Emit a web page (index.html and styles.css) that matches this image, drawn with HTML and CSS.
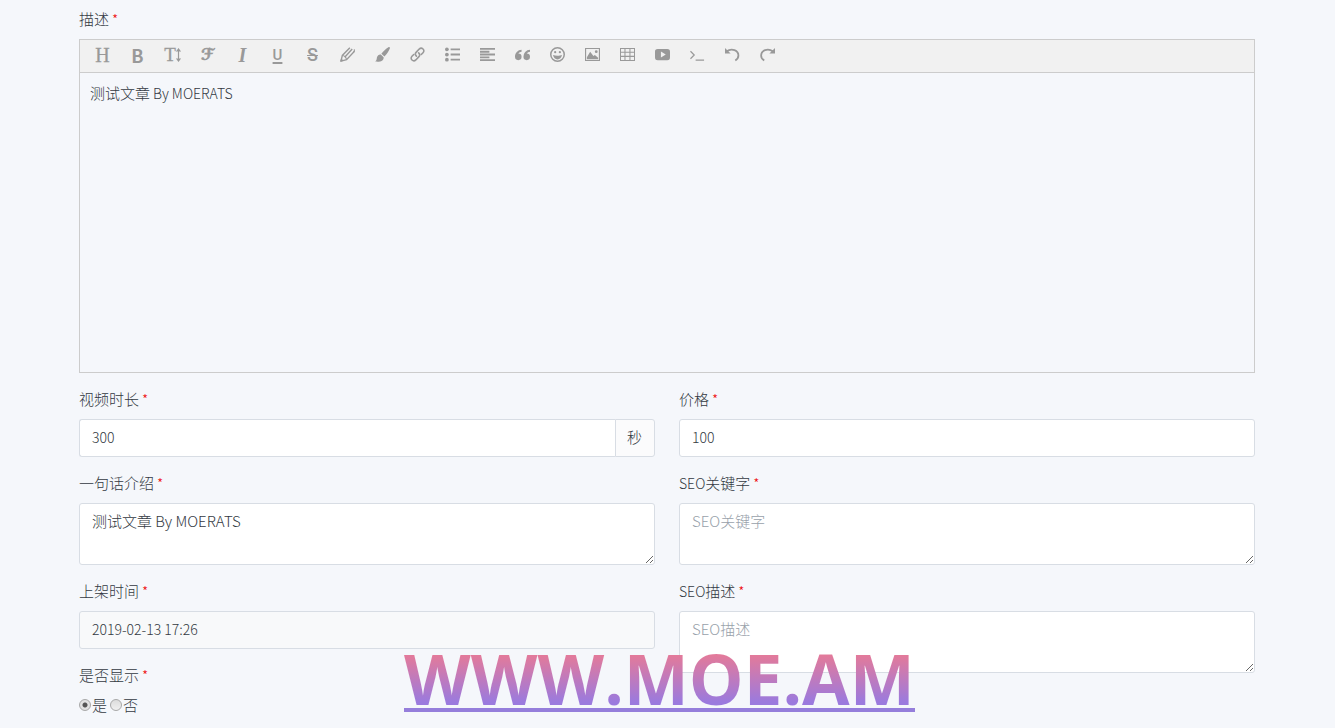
FILE: index.html
```html
<!DOCTYPE html>
<html lang="zh-CN">
<head>
<meta charset="utf-8">
<title>文章编辑</title>
<link rel="stylesheet" href="styles.css">
</head>
<body>
<form class="page">
  <section class="group">
    <span class="label" id="desc-label">描述<span class="req">*</span></span>
    <div class="editor">
      <div class="toolbar" role="toolbar" aria-label="编辑器">
        <button type="button" class="tool tool-h">H</button>
        <button type="button" class="tool tool-b">B</button>
        <button type="button" class="tool tool-t" aria-label="字号">T<svg class="updown" viewBox="0 0 5 14"><path d="M2.5 2v10M0.6 3.6L2.5 1l1.9 2.6M0.6 10.4L2.5 13l1.9-2.6" fill="none" stroke="currentColor" stroke-width="1.2"/></svg></button>
        <button type="button" class="tool tool-f">ℱ</button>
        <button type="button" class="tool tool-i">I</button>
        <button type="button" class="tool tool-u">U</button>
        <button type="button" class="tool tool-s">S</button>
        <button type="button" class="tool" aria-label="文字颜色"><svg class="icon" viewBox="0 0 16 16"><path d="M1 15l1.500-6L10.500.8M1 15l6-1.500L15.500 4.500M5 11L13 2.200" fill="none" stroke="currentColor" stroke-width="1.500"/><path d="M2.500 9C4.500 9.200 6.500 11 7 13.500M14 6c1.200-1.200 1.600-2.500 1.200-3.500" fill="none" stroke="currentColor" stroke-width="1.200"/><path d="M0 16l1.300-4 2.500 2.600z" fill="currentColor"/></svg></button>
        <button type="button" class="tool" aria-label="背景色"><svg class="icon" viewBox="0 0 16 16"><path d="M14.300.2c.9-.4 2 .5 1.500 1.500-1 2.700-3.400 6.700-5.800 8.500L6.800 7.200C8.600 4.700 11.700 1.700 14.300.2zM6.200 8l3 2.900c.4 3.900-4.200 5.400-9.200 4.400 2-1 1.600-2.200 2.100-4.400.6-2 2.300-3.300 4.100-2.900z" fill="currentColor"/></svg></button>
        <button type="button" class="tool" aria-label="链接"><svg class="icon" viewBox="0 0 16 16"><g fill="none" stroke="currentColor" stroke-width="1.700" stroke-linecap="round"><path d="M6.800 9.800C5.400 8.400 5.400 6.700 6.700 5.400L9.800 2.200C12.500-.4 16.600 3.300 13.900 6.100L12 8"/><path d="M9.200 6.200c1.400 1.400 1.400 3.100.1 4.400l-3.100 3.200c-2.700 2.600-6.800-1.100-4.100-3.900L4 8"/></g></svg></button>
        <button type="button" class="tool" aria-label="列表"><svg class="icon" viewBox="0 0 16 16"><path d="M6 1.500h10v2H6zM6 7h10v2H6zM6 12.500h10v2H6z" fill="currentColor"/><g fill="currentColor"><circle cx="2" cy="2.500" r="2"/><circle cx="2" cy="8" r="2"/><circle cx="2" cy="13.500" r="2"/></g></svg></button>
        <button type="button" class="tool" aria-label="对齐"><svg class="icon" viewBox="0 0 16 16"><path d="M0 1h16v2H0zM0 4h10v2H0zM0 7h16v2H0zM0 10h10v2H0zM0 13h16v2H0z" fill="currentColor"/></svg></button>
        <button type="button" class="tool" aria-label="引用"><svg class="icon" viewBox="0 0 16 16"><g fill="currentColor"><path d="M3.500 7a3.500 3.500 0 1 1-3.500 3.500A7 7 0 0 1 7 3v2a5 5 0 0 0-3.500 2z"/><path d="M12.500 7A3.500 3.500 0 1 1 9 10.500 7 7 0 0 1 16 3v2a5 5 0 0 0-3.500 2z"/></g></svg></button>
        <button type="button" class="tool" aria-label="表情"><svg class="icon" viewBox="0 0 16 16"><circle cx="8" cy="8" r="7.200" fill="none" stroke="currentColor" stroke-width="1.600"/><circle cx="5.500" cy="5.500" r="1.200" fill="currentColor"/><circle cx="10.500" cy="5.500" r="1.200" fill="currentColor"/><path d="M3.200 8.500c2.500 1 7.100 1 9.600 0-.5 2.800-2.500 4.700-4.800 4.700s-4.300-1.900-4.800-4.700z" fill="currentColor"/></svg></button>
        <button type="button" class="tool" aria-label="图片"><svg class="icon" viewBox="0 0 16 16"><path d="M.6 1.600h14.800v12.800H.6z" fill="none" stroke="currentColor" stroke-width="1.200"/><path d="M2 13V11l3.500-6L9 9.500l1.500-1L14 11.500V13z" fill="currentColor"/><circle cx="12" cy="5" r="1.500" fill="currentColor"/></svg></button>
        <button type="button" class="tool" aria-label="表格"><svg class="icon" viewBox="0 0 16 16"><path d="M.5 1.500h15v13H.5zM.5 5.500h15M.5 10h15M5.300 1.500v13M10.600 1.500v13" fill="none" stroke="currentColor" stroke-width="1.100"/></svg></button>
        <button type="button" class="tool" aria-label="视频"><svg class="icon" viewBox="0 0 16 16"><path fill-rule="evenodd" d="M3 2h10c2.300 0 3 .9 3 3v6c0 2.100-.7 3-3 3H3c-2.300 0-3-.9-3-3V5c0-2.100.7-3 3-3zm3.300 2.800v6.400L11.500 8z" fill="currentColor"/></svg></button>
        <button type="button" class="tool" aria-label="代码"><svg class="icon" viewBox="0 0 16 16"><path d="M.5 4.500L4.500 8.500l-4 4M6 14h9" fill="none" stroke="currentColor" stroke-width="1.300"/></svg></button>
        <button type="button" class="tool" aria-label="撤销"><svg class="icon" viewBox="0 0 16 16"><path d="M1.500 4.800c6-4.300 12.800-.8 12.800 4.200 0 2.400-1.200 4-3.300 5.500" fill="none" stroke="currentColor" stroke-width="1.900"/><path d="M0 1v6h6z" fill="currentColor"/></svg></button>
        <button type="button" class="tool" aria-label="重做"><svg class="icon" viewBox="0 0 16 16"><path d="M14 4.800C8 .5 1.200 4 1.200 9c0 2.400 1.200 4 3.300 5.500" fill="none" stroke="currentColor" stroke-width="1.900"/><path d="M16 1v6h-6z" fill="currentColor"/></svg></button>
      </div>
      <div class="editor-body" contenteditable="true" role="textbox" aria-labelledby="desc-label">测试文章<span class="latin"> By MOERATS</span></div>
    </div>
  </section>

  <div class="columns">
    <div class="column">
      <div class="group">
        <label class="label" for="duration">视频时长<span class="req">*</span></label>
        <div class="input-group">
          <input class="control latin" id="duration" type="text" value="300">
          <span class="addon">秒</span>
        </div>
      </div>
      <div class="group">
        <label class="label" for="intro">一句话介绍<span class="req">*</span></label>
        <textarea class="control area" id="intro">测试文章 By MOERATS</textarea>
      </div>
      <div class="group">
        <label class="label" for="time">上架时间<span class="req">*</span></label>
        <input class="control latin" id="time" type="text" value="2019-02-13 17:26" readonly>
      </div>
      <div class="group">
        <span class="label">是否显示<span class="req">*</span></span>
        <div class="radios">
          <label class="choice"><input class="radio" type="radio" name="show" checked>是</label>
          <label class="choice"><input class="radio" type="radio" name="show">否</label>
        </div>
      </div>
    </div>
    <div class="column">
      <div class="group">
        <label class="label" for="price">价格<span class="req">*</span></label>
        <input class="control latin" id="price" type="text" value="100">
      </div>
      <div class="group">
        <label class="label" for="seo-key"><span class="latin">SEO</span>关键字<span class="req">*</span></label>
        <textarea class="control area" id="seo-key" placeholder="SEO关键字"></textarea>
      </div>
      <div class="group">
        <label class="label" for="seo-desc"><span class="latin">SEO</span>描述<span class="req">*</span></label>
        <textarea class="control area" id="seo-desc" placeholder="SEO描述"></textarea>
      </div>
    </div>
  </div>
</form>
<div class="watermark"><span class="watermark-text">WWW.MOE.AM</span></div>
</body>
</html>
```
FILE: styles.css
```css
* { box-sizing: border-box; }

body {
  margin: 0;
  background: #f5f7fb;
  color: #333942;
  font: 300 15px/22px "Noto Sans CJK SC", sans-serif;
}

.page { padding: 8px 80px 0 79px; }
.group { margin-bottom: 15px; }
.label { display: block; height: 22px; margin-bottom: 9px; }
.req { margin-left: 3px; color: #e00; font-size: 14px; line-height: 1; }
.latin { font-size: 14px; }

.editor { border: 1px solid #ccc; }
.toolbar {
  display: flex;
  height: 33px;
  padding: 0 5px;
  background: #f1f1f1;
  border-bottom: 1px solid #ccc;
}
.tool {
  display: flex;
  align-items: center;
  justify-content: center;
  width: 35px;
  height: 29px;
  padding: 0;
  border: 0;
  background: none;
  color: #999;
}
.icon { width: 15px; height: 15px; }
.tool-h { font: 20px/20px "Liberation Serif", serif; -webkit-text-stroke: 0.3px #999; }
.tool-b { font: bold 18px/20px "Noto Sans CJK SC", sans-serif; }
.tool-t { font: 19px/20px "Liberation Serif", serif; -webkit-text-stroke: 0.3px #999; }
.updown { width: 5px; height: 14px; }
.tool-f { font: bold 16px/20px "DejaVu Sans", sans-serif; -webkit-text-stroke: 0.6px #999; }
.tool-i { font: italic bold 20px/20px "Liberation Serif", serif; }
.tool-u { font: 500 15px/18px Roboto, sans-serif; text-decoration: underline 2px; text-underline-offset: 2px; }
.tool-s { font: 500 18px/20px Roboto, sans-serif; text-decoration: line-through 1px; }
.editor-body { min-height: 299px; padding: 9px 10px; }

.columns { display: grid; grid-template-columns: 1fr 1fr; gap: 24px; }

.control {
  display: block;
  width: 100%;
  height: 38px;
  margin: 0;
  padding: 6px 12px 8px;
  border: 1px solid #d8dde4;
  border-radius: 3px;
  background: #fff;
  color: inherit;
  font-family: inherit;
  font-weight: inherit;
  line-height: inherit;
}
.control::placeholder { color: #98a1aa; opacity: 1; }
.control:read-only { background: #f8f9fa; }
.area { height: 62px; font-size: 15px; resize: vertical; }

.input-group { display: flex; }
.input-group .control { flex: 1; border-right: 0; border-radius: 3px 0 0 3px; }
.addon {
  padding: 6px 12px 8px 11px;
  border: 1px solid #d8dde4;
  border-radius: 0 3px 3px 0;
  background: #fbfbfc;
}

.radios { display: flex; gap: 3px; line-height: 20px; }
.choice { display: flex; align-items: center; gap: 1px; }
.radio {
  appearance: none;
  width: 12px;
  height: 12px;
  margin: 0;
  border: 1px solid #a8a8a8;
  border-radius: 50%;
  background: linear-gradient(#dcdcdc, #f0f0f0);
}
.radio:checked { background: radial-gradient(circle, #555 0 2px, #e2e2e2 3px); }

.watermark {
  position: fixed;
  left: 404px;
  bottom: 16px;
  border-bottom: 4px solid #957edb;
  pointer-events: none;
}
.watermark-text {
  display: block;
  padding-bottom: 2px;
  background: linear-gradient(#e2789a 10%, #9a78de 90%);
  -webkit-background-clip: text;
  background-clip: text;
  color: transparent;
  font: bold 69px/56px "Open Sans", sans-serif;
  opacity: 0.98;
}
```
